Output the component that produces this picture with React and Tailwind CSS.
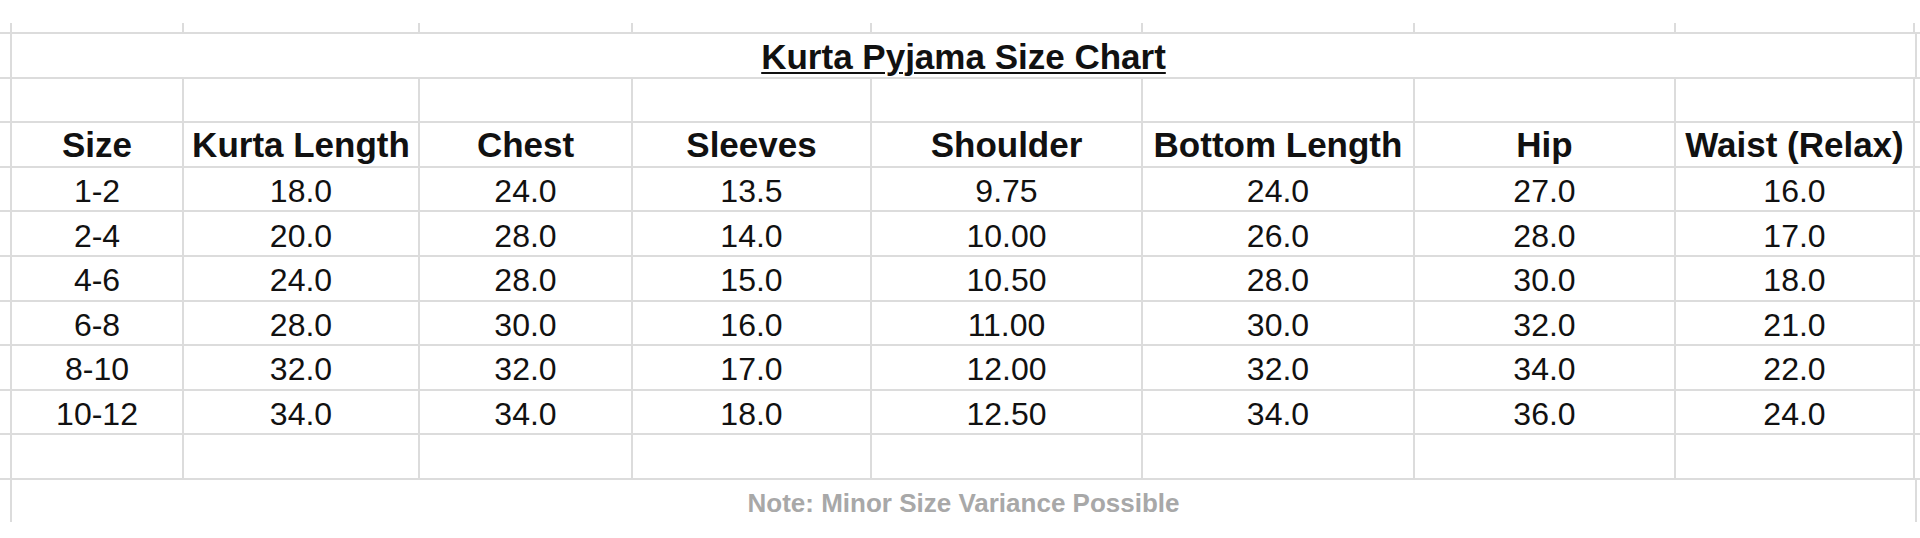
const columns = [
  { label: "Size", w: "w-[172px]" },
  { label: "Kurta Length", w: "w-[236px]" },
  { label: "Chest", w: "w-[213px]" },
  { label: "Sleeves", w: "w-[239px]" },
  { label: "Shoulder", w: "w-[271px]" },
  { label: "Bottom Length", w: "w-[272px]" },
  { label: "Hip", w: "w-[261px]" },
  { label: "Waist (Relax)", w: "w-[241px]" },
];

const rows = [
  ["1-2", "18.0", "24.0", "13.5", "9.75", "24.0", "27.0", "16.0"],
  ["2-4", "20.0", "28.0", "14.0", "10.00", "26.0", "28.0", "17.0"],
  ["4-6", "24.0", "28.0", "15.0", "10.50", "28.0", "30.0", "18.0"],
  ["6-8", "28.0", "30.0", "16.0", "11.00", "30.0", "32.0", "21.0"],
  ["8-10", "32.0", "32.0", "17.0", "12.00", "32.0", "34.0", "22.0"],
  ["10-12", "34.0", "34.0", "18.0", "12.50", "34.0", "36.0", "24.0"],
];

const line = "border-[#dcdcdc]";

function Row({ cells, className = "", textClass = "" }) {
  return (
    <div className={`flex h-[44.6px] border-t-2 ${line}`}>
      <div className="w-[10px] shrink-0" />
      {columns.map((col, i) => (
        <div
          key={col.label}
          className={`${col.w} shrink-0 border-l-2 ${line} ${
            i === columns.length - 1 ? "border-r-2" : ""
          } flex items-center justify-center ${className}`}
        >
          <span className={textClass}>{cells ? cells[i] : ""}</span>
        </div>
      ))}
    </div>
  );
}

export default function App() {
  return (
    <div
      className="w-[1920px] h-[538px] bg-white text-[#111] overflow-hidden"
      style={{ fontFamily: '"Liberation Sans", Arial, sans-serif' }}
    >
      <div className="h-[23px]" />

      {/* stubs of the column lines above the sheet */}
      <div className="flex h-[9px]">
        <div className="w-[10px] shrink-0" />
        {columns.map((col, i) => (
          <div
            key={col.label}
            className={`${col.w} shrink-0 border-l-2 ${line} ${
              i === columns.length - 1 ? "border-r-2" : ""
            }`}
          />
        ))}
      </div>

      {/* title */}
      <div className={`flex h-[44.6px] border-t-2 ${line}`}>
        <div className="w-[10px] shrink-0" />
        <div
          className={`w-[1907px] shrink-0 border-x-2 ${line} flex items-center justify-center pt-[2px]`}
        >
          <span className="text-[35px] font-bold underline decoration-2 underline-offset-[3px] leading-none">
            Kurta Pyjama Size Chart
          </span>
        </div>
      </div>

      <Row />
      <Row
        cells={columns.map((c) => c.label)}
        textClass="text-[35px] font-bold leading-none"
      />
      {rows.map((r) => (
        <Row
          key={r[0]}
          cells={r}
          className="pt-[4px]"
          textClass="text-[32px] leading-none"
        />
      ))}
      <Row />

      {/* note */}
      <div className={`flex h-[44px] border-t-2 ${line}`}>
        <div className="w-[10px] shrink-0" />
        <div
          className={`w-[1907px] shrink-0 border-x-2 ${line} flex items-center justify-center pt-[4px]`}
        >
          <span className="text-[26px] font-bold text-[#a8a8a8] leading-none">
            Note: Minor Size Variance Possible
          </span>
        </div>
      </div>
    </div>
  );
}
